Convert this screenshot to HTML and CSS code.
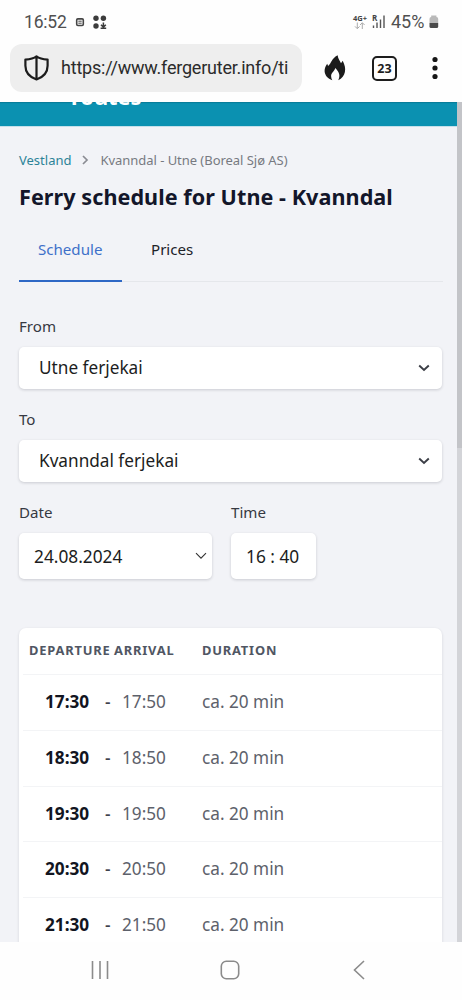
FILE: index.html
```
<!DOCTYPE html>
<html lang="en">
<head>
<meta charset="utf-8">
<title>Ferry schedule for Utne - Kvanndal</title>
<link rel="stylesheet" href="styles.css">
</head>
<body>
<div class="status">
  <span class="clock">16:52</span>
  <svg class="notif" width="34" height="18" viewBox="0 0 34 18">
    <rect x="2.700" y="5.900" width="6.600" height="6.600" rx="1.200" fill="none" stroke="#454545" stroke-width="1.600"/>
    <path d="M4.300 8.200h3.400M4.300 10.200h3.400" stroke="#454545" stroke-width="1"/>
    <g fill="#3c3c3c"><circle cx="22" cy="5.200" r="2.700"/><circle cx="29.400" cy="5.200" r="2.700"/><circle cx="22" cy="13" r="2.700"/></g>
    <path d="M29.400 9.500v4M27 11.700l2.400 2.400 2.400-2.400M26.600 15.300h5.600" fill="none" stroke="#3c3c3c" stroke-width="1.500"/>
  </svg>
  <div class="net"><span>4G+</span>
    <svg width="12" height="8" viewBox="0 0 12 8"><path d="M3.300 .5v6M1 4.400l2.300 2.300 2.300-2.300M8.300 7V1M6 3l2.300-2.300L10.600 3" fill="none" stroke="#aaa" stroke-width="1"/></svg>
  </div>
  <svg class="signal" width="15" height="17" viewBox="0 0 15 17">
    <text x="0" y="7.500" class="roam">R</text>
    <path d="M1.500 12.500v2.500M5 9.500v5.500M8.500 6.500v8.500M12 2.500v12.500" stroke="#555" stroke-width="1.400"/>
  </svg>
  <span class="pct">45%</span>
  <svg class="battery" width="10" height="14" viewBox="0 0 10 14">
    <path d="M.5 4Q.5 2.200 2.200 2V.6h5.200V2Q9.200 2.200 9.200 4v4H.5z" fill="#b9b9b9"/>
    <path d="M.5 8h8.700v3.500q0 1.500-1.500 1.500H2Q.5 13 .5 11.500z" fill="#4a4a4a"/>
  </svg>
</div>
<div class="toolbar">
  <div class="address">
    <svg width="28" height="28" viewBox="0 0 28 28"><path d="M14.500 2.300C11.500 4.600 7.500 5.300 3.400 5.600v6.200c0 6.600 4.100 11.300 11.100 13.700 7-2.400 11.100-7.100 11.100-13.700V5.600C21.500 5.300 17.500 4.600 14.500 2.300zM14.500 2.500v22.800" fill="none" stroke="#1c1c1c" stroke-width="2.200" stroke-linejoin="round"/></svg>
    <span class="url">https://www.fergeruter.info/ti</span>
  </div>
  <svg class="fire" width="22" height="26" viewBox="0 0 22 26"><path d="M13.600.2c.5 4 2.400 5.600 3.400 8l1.700-2.400c2 4.200 3 7.500 2.200 11.100-.7 3.500-2.900 6.300-6.600 8.300 2.100-4.300 1.300-7.500-2.900-12.100C10.600 16 7.200 18 7.100 21c0 1.500.4 2.900 1.200 4.300C3.800 23.500.8 20.200.6 16.200c-.1-2.900 1-5.200 2.600-7.500l.9 2.400C7.800 7.600 7.300 3.600 13.600.2z" fill="#1b1b1b"/></svg>
  <div class="tabcount">23</div>
  <svg class="dots" width="6" height="24" viewBox="0 0 6 24" fill="#161616"><circle cx="3" cy="3.500" r="2.600"/><circle cx="3" cy="12" r="2.600"/><circle cx="3" cy="20.500" r="2.600"/></svg>
</div>
<main class="viewport">
  <div class="banner"><span>routes</span></div>
  <div class="content">
    <nav class="crumbs"><a>Vestland</a>
      <svg width="8" height="10" viewBox="0 0 8 10"><path d="M2 1l4 4-4 4" fill="none" stroke="#8a8c93" stroke-width="1.700"/></svg>
      <span>Kvanndal - Utne (Boreal Sjø AS)</span></nav>
    <h1>Ferry schedule for Utne - Kvanndal</h1>
    <div class="tabs"><div class="tab active">Schedule</div><div class="tab">Prices</div></div>
    <div class="label">From</div>
    <div class="select"><span>Utne ferjekai</span><svg width="12" height="8" viewBox="0 0 12 8"><path d="M1.200 1.500L6 6l4.800-4.500" fill="none" stroke="#3b3e46" stroke-width="1.900"/></svg></div>
    <div class="label">To</div>
    <div class="select"><span>Kvanndal ferjekai</span><svg width="12" height="8" viewBox="0 0 12 8"><path d="M1.200 1.500L6 6l4.800-4.500" fill="none" stroke="#3b3e46" stroke-width="1.900"/></svg></div>
    <div class="when">
      <div class="date"><div class="label">Date</div><div class="input"><span>24.08.2024</span><svg width="12" height="8" viewBox="0 0 12 8"><path d="M1 1.200L6 6.200l5-5" fill="none" stroke="#333" stroke-width="1.100"/></svg></div></div>
      <div class="time"><div class="label">Time</div><div class="input"><span>16 : 40</span></div></div>
    </div>
    <div class="card">
      <div class="head"><span>DEPARTURE</span><span>ARRIVAL</span><span>DURATION</span></div>
      <div class="row"><b>17:30</b><i>-</i><span>17:50</span><span>ca. 20 min</span></div>
      <div class="row"><b>18:30</b><i>-</i><span>18:50</span><span>ca. 20 min</span></div>
      <div class="row"><b>19:30</b><i>-</i><span>19:50</span><span>ca. 20 min</span></div>
      <div class="row"><b>20:30</b><i>-</i><span>20:50</span><span>ca. 20 min</span></div>
      <div class="row"><b>21:30</b><i>-</i><span>21:50</span><span>ca. 20 min</span></div>
    </div>
  </div>
  <div class="scroll"><div class="thumb"></div></div>
</main>
<div class="navbar">
  <svg width="20" height="20" viewBox="0 0 20 20"><path d="M2.500 1v18M10 1v18M17.500 1v18" stroke="#8b8b8b" stroke-width="1.600"/></svg>
  <svg width="20" height="20" viewBox="0 0 20 20"><rect x="1.300" y="1.300" width="17.400" height="17.400" rx="5" fill="none" stroke="#8b8b8b" stroke-width="1.600"/></svg>
  <svg width="20" height="20" viewBox="0 0 20 20"><path d="M15 1L5.500 10l9.500 9" fill="none" stroke="#8b8b8b" stroke-width="1.600"/></svg>
</div>
</body>
</html>
```
FILE: styles.css
```
* { box-sizing: border-box; }
body { margin: 0; width: 462px; height: 1000px; overflow: hidden; background: #fefefe; font-family: "Noto Sans", sans-serif; color: #202228; display: flex; flex-direction: column; }
svg { display: block; flex: none; }
.status { height: 43px; display: flex; align-items: center; padding: 0 23px 0 24px; font-family: Roboto, sans-serif; color: #505050; flex: none; }
.clock { font-size: 17.5px; width: 50px; letter-spacing: -.2px; }
.net { margin-left: auto; width: 16px; font: bold 7.5px/8px "Open Sans", sans-serif; color: #444; margin-right: 3px; }
.net svg { margin-left: 1px; }
.roam { font: bold 8px "Open Sans", sans-serif; fill: #444; }
.signal { margin-right: 4px; }
.pct { font-size: 18px; width: 38px; }
.toolbar { height: 59px; display: flex; padding: 1px 0 0 10px; flex: none; align-items: flex-start; }
.address { width: 292px; height: 48px; border-radius: 12px; background: #eee; display: flex; align-items: center; padding: 0 13px 0 12px; }
.url { font: 18px/26px Roboto, sans-serif; color: #2b2b2b; margin-left: 11px; white-space: nowrap; overflow: hidden; flex: 1; letter-spacing: -.21px; }
.fire { margin: 11px 0 0 22px; }
.tabcount { width: 25px; height: 25px; margin: 12px 0 0 26px; border: 2px solid #1d1d1d; border-radius: 5px; font: bold 12.5px/21px "Open Sans", sans-serif; text-align: center; color: #1d1d1d; }
.dots { margin: 12px 0 0 35px; }
.viewport { height: 840px; position: relative; overflow: hidden; background: #f2f3f7; flex: none; }
.banner { height: 25px; background: #0b91b1; border-bottom: 1px solid #c5e0ea; color: #fff; font: bold 21.8px/28px "Noto Sans", sans-serif; overflow: hidden; padding-left: 71px; box-shadow: inset 0 2px 1px -1px #087c98; }
.banner span { display: block; margin-top: -19px; }
.content { padding: 22px 19px 0; width: 462px; }
.crumbs { display: flex; align-items: center; height: 22px; font-size: 13px; color: #777a81; white-space: nowrap; }
.crumbs a { color: #2c8397; }
.crumbs span { letter-spacing: -.04px; }
.crumbs svg { margin: 0 11px 0 10px; }
h1 { font-size: 21.6px; line-height: 30px; margin: 11px 0 0; color: #13162a; white-space: nowrap; letter-spacing: .05px; }
.tabs { display: flex; height: 70px; border-bottom: 1px solid #e5e7eb; }
.tab { height: 70px; line-height: 75px; font-size: 15.1px; padding: 0 29px; color: #202228; flex: none; }
.tab.active { width: 103px; padding: 0 0 0 19px; color: #3e70c9; border-bottom: 2px solid #2e68c5; }
.label { font-size: 15.1px; line-height: 22px; color: #363942; }
.tabs + .label { margin-top: 33px; }
.select { width: 423px; height: 42px; margin: 10px 0 19px; border-radius: 5px; background: #fff; box-shadow: 0 1px 3px rgba(20,20,40,.18); display: flex; align-items: center; justify-content: space-between; padding: 0 12px 1px 20px; font-size: 17.2px; color: #1c1d21; }
.when { display: flex; gap: 19px; margin-top: 19px; }
.date { width: 193px; }
.time { width: 85px; }
.input { height: 46px; margin-top: 10px; border-radius: 5px; background: #fff; box-shadow: 0 1px 3px rgba(20,20,40,.18); display: flex; align-items: center; justify-content: space-between; padding: 0 5px 0 15px; font-size: 17.3px; color: #1c1d21; white-space: nowrap; }
.card { width: 423px; margin-top: 49px; background: #fff; border-radius: 7px; box-shadow: 0 1px 3px rgba(20,20,40,.14); }
.head { height: 46px; line-height: 45px; display: grid; grid-template-columns: 85px 88px 1fr; padding-left: 10px; font-size: 12.9px; font-weight: bold; letter-spacing: .8px; color: #505663; }
.row { height: 55.75px; line-height: 54px; margin-left: 4px; border-top: 1px solid #f3f4f6; display: grid; grid-template-columns: 60px 17px 80px 1fr; padding-left: 22px; font-size: 17.2px; color: #5d616b; }
.row b { color: #12151f; }
.row i { font-style: normal; font-weight: 500; color: #3e424c; }
.scroll { position: absolute; right: 0; top: 0; width: 5px; height: 840px; background: #d3d4d8; }
.thumb { height: 346px; background: #c3c4c8; }
.navbar { height: 58px; display: flex; justify-content: space-between; padding: 18px 93px 0 90px; }
```
